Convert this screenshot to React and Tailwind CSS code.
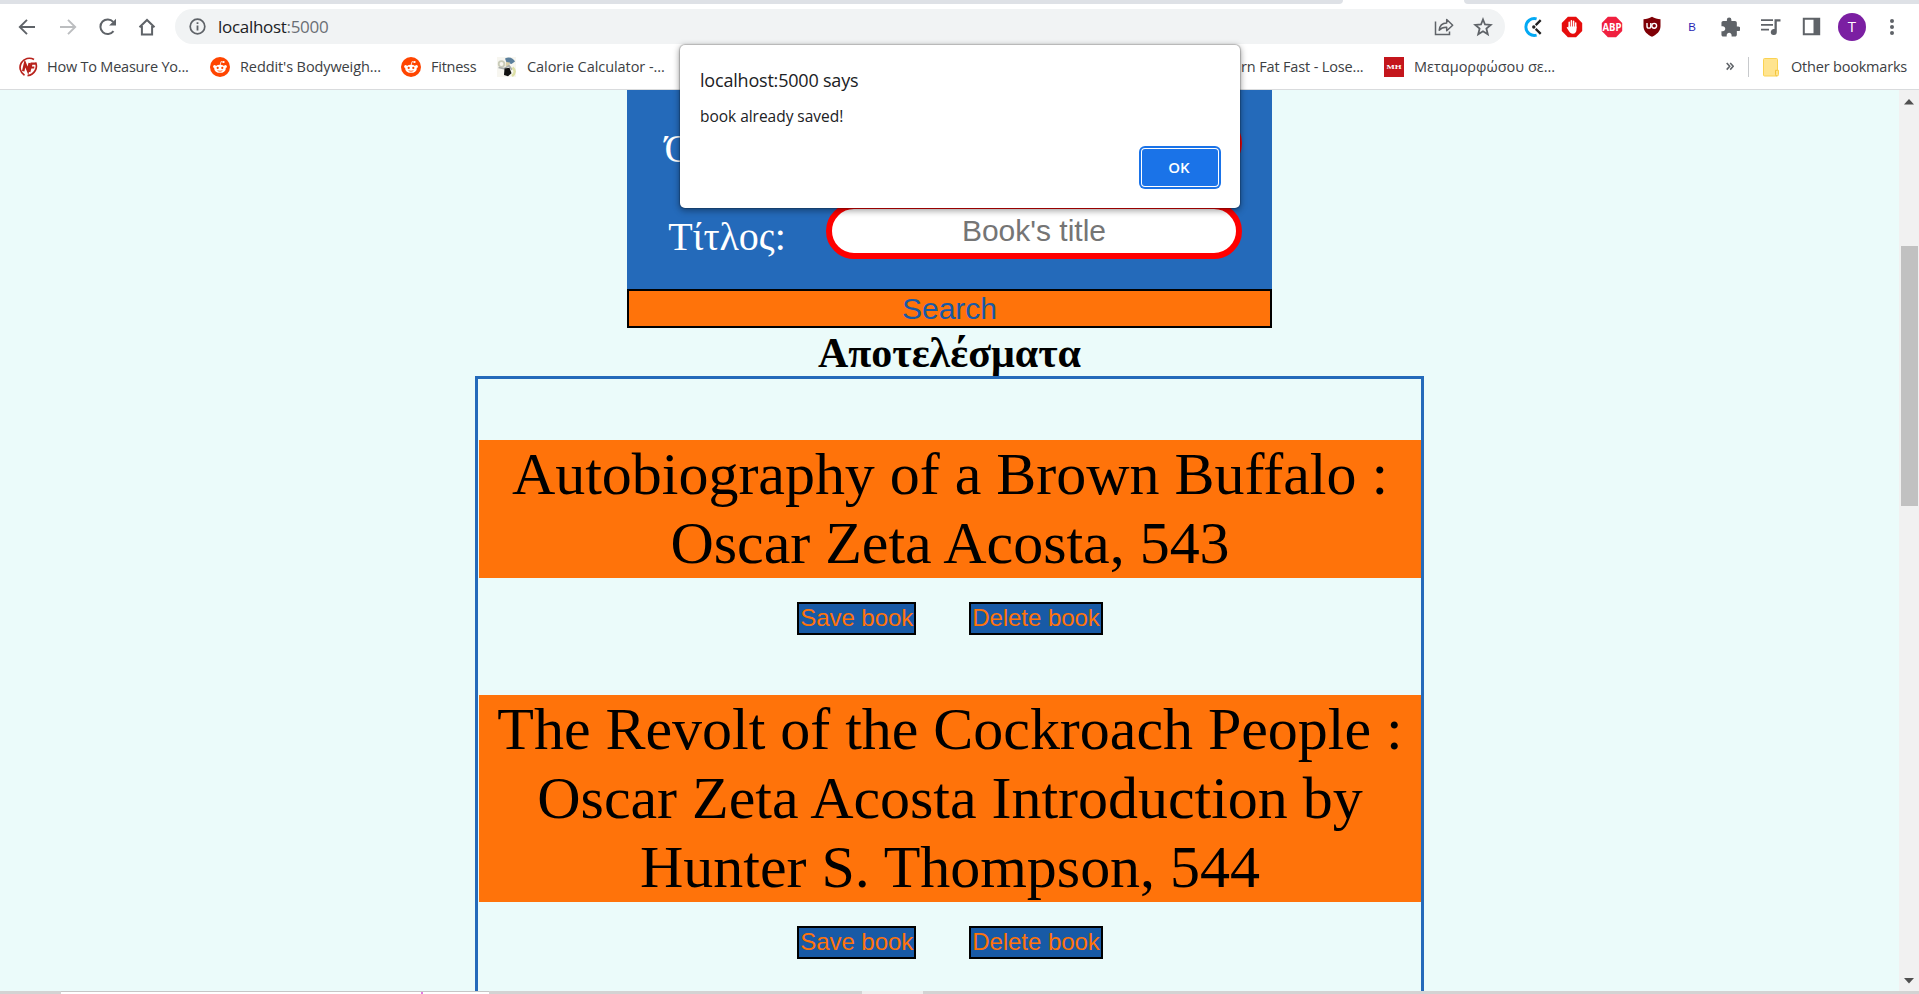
import React from "react";

const ui = "font-['Open_Sans',sans-serif]";

function RedditIcon() {
  return (
    <svg width="20" height="20" viewBox="0 0 20 20" className="shrink-0">
      <circle cx="10" cy="10" r="10" fill="#ff4500" />
      <path d="M10.200 8l.800-3.400 2.600.600" stroke="#fff" strokeWidth=".800" fill="none" />
      <circle cx="13.600" cy="5" r="1.100" fill="#fff" />
      <circle cx="4.600" cy="9.600" r="1.500" fill="#fff" />
      <circle cx="15.400" cy="9.600" r="1.500" fill="#fff" />
      <ellipse cx="10" cy="11.800" rx="5.800" ry="4" fill="#fff" />
      <circle cx="7.700" cy="10.900" r="1.100" fill="#ff4500" />
      <circle cx="12.300" cy="10.900" r="1.100" fill="#ff4500" />
      <path d="M7.600 13.400c1.300 1.100 3.500 1.100 4.800 0" stroke="#ff4500" strokeWidth=".800" fill="none" />
    </svg>
  );
}

function Toolbar() {
  return (
    <div className="flex h-[45px] w-full items-center pt-[8px]">
      <svg className="ml-[17px]" width="20" height="20" viewBox="0 0 20 20" fill="none" stroke="#5f6368" strokeWidth="1.900">
        <path d="M18 10H3.200M10 2.800L2.800 10l7.200 7.200" />
      </svg>
      <svg className="ml-[21px]" width="20" height="20" viewBox="0 0 20 20" fill="none" stroke="#bcbec0" strokeWidth="1.900">
        <path d="M2 10h14.800M10 2.800l7.200 7.200-7.200 7.200" />
      </svg>
      <svg className="ml-[20px]" width="20" height="20" viewBox="0 0 20 20">
        <path d="M15.500 14.200A7.300 7.300 0 1 1 15.200 4.900" fill="none" stroke="#5f6368" strokeWidth="2" />
        <path d="M18 1.700v6.900h-6.900z" fill="#5f6368" />
      </svg>
      <svg className="ml-[19px]" width="20" height="20" viewBox="0 0 20 20">
        <path d="M2.500 10.300L10 3l7.500 7.300M4.900 9v8.600h10.200V9" fill="none" stroke="#5f6368" strokeWidth="2" />
      </svg>
      <div className="ml-[18px] flex h-[35px] w-[1330px] items-center rounded-full bg-[#f1f3f4]">
        <svg className="ml-[14px]" width="17" height="17" viewBox="0 0 17 17">
          <circle cx="8.500" cy="8.500" r="7.300" fill="none" stroke="#5f6368" strokeWidth="1.700" />
          <path d="M8.500 7.400v5M8.500 4.200v1.900" stroke="#5f6368" strokeWidth="1.800" />
        </svg>
        <span className="ml-[12px] flex-1 text-[17px] leading-[24px] tracking-[-0.300px] text-[#202124]">
          localhost<span className="text-[#6b6f74]">:5000</span>
        </span>
        <svg width="20" height="20" viewBox="0 0 20 20" fill="none" stroke="#5f6368" strokeWidth="1.500">
          <path d="M1.500 4.500v13h14V14.500" />
          <path d="M5.200 13.200C5.600 9 8.200 6.300 12.700 6.100V2.500l6 5.700-6 5.600v-3.600c-3.300-.1-5.700.8-7.500 3z" strokeLinejoin="round" />
        </svg>
        <svg className="ml-[19px] mr-[12px]" width="20" height="20" viewBox="0 0 20 20" fill="none" stroke="#5f6368" strokeWidth="1.800">
          <path d="M10 2.500l2 5 5.700.4-4.300 3.700 1.400 5.700-4.800-3.100-4.800 3.100 1.400-5.700L2.300 7.900 8 7.500z" />
        </svg>
      </div>
      <svg className="ml-[17px]" width="22" height="22" viewBox="0 0 22 22">
        <path d="M14.600 2.800A8.500 8.500 0 1 0 14.600 19.200" fill="none" stroke="#03a9f4" strokeWidth="2.900" />
        <circle cx="11.800" cy="11" r="1.700" fill="#222" />
        <path d="M13.700 9.100l5-5M13.700 12.900l5 5" stroke="#222" strokeWidth="2.300" />
      </svg>
      <svg className="ml-[17px]" width="22" height="22" viewBox="0 0 22 22">
        <path d="M6.900.800h8.200L21.200 6.900v8.200L15.100 21.200H6.900L.800 15.100V6.900z" fill="#e60d0d" />
        <path d="M8.200 11.500V6.300M10.400 11V4.800M12.600 11V5.300M14.700 12V7" stroke="#fff" strokeWidth="1.500" strokeLinecap="round" />
        <path d="M7.400 10.500h8.100v3.200c0 2.200-1.300 4-3.600 4-2 0-2.900-.9-3.900-2.500L5.600 11.600c.6-1.100 1.500-.7 2 .2z" fill="#fff" />
      </svg>
      <svg className="ml-[18px]" width="22" height="22" viewBox="0 0 22 22">
        <path d="M6.900.800h8.200L21.200 6.900v8.200L15.100 21.200H6.900L.800 15.100V6.900z" fill="#f0203f" />
        <text x="11" y="14.600" textAnchor="middle" fontSize="10" fontWeight="700" fontFamily="Open Sans" textLength="19" lengthAdjust="spacingAndGlyphs" fill="#fff">ABP</text>
      </svg>
      <svg className="ml-[18px]" width="22" height="22" viewBox="0 0 22 22">
        <path d="M11 .800c2.600 1.600 5.500 2.400 8.500 2.400v7c0 5.200-4 8.300-8.500 10.600C6.500 18.500 2.500 15.400 2.500 10.200v-7c3 0 5.900-.8 8.500-2.400z" fill="#7f0006" />
        <path d="M6 7v3.200a1.900 1.900 0 0 0 3.800 0V7" fill="none" stroke="#fff" strokeWidth="1.400" />
        <circle cx="13.200" cy="9.800" r="2.400" fill="none" stroke="#fff" strokeWidth="1.400" />
      </svg>
      <span className="ml-[18px] w-[22px] text-center font-['Liberation_Sans'] text-[11.500px] leading-[22px] text-[#2a1fb5]">B</span>
      <svg className="ml-[18px]" width="19" height="20" viewBox="1.500 1 21 21" fill="#5f6368">
        <path d="M20.500 11H19V7c0-1.100-.9-2-2-2h-4V3.500a2.500 2.500 0 0 0-5 0V5H4c-1.100 0-1.990.9-1.990 2v3.800H3.500c1.490 0 2.700 1.210 2.700 2.700s-1.210 2.700-2.700 2.700H2V20c0 1.100.9 2 2 2h3.800v-1.500c0-1.490 1.210-2.700 2.700-2.700 1.490 0 2.700 1.210 2.700 2.700V22H17c1.100 0 2-.9 2-2v-4h1.500a2.500 2.500 0 0 0 0-5z" />
      </svg>
      <svg className="ml-[21px]" width="20" height="20" viewBox="0 0 20 20" fill="#5f6368">
        <path d="M0 2.300h12v1.800H0zM0 7h12v1.800H0zM0 11.700h8v1.800H0zM13.500 2.300h6v2.300h-3.700v10.400a3 3 0 1 1-2.300-2.900z" />
      </svg>
      <svg className="ml-[21px]" width="19" height="19" viewBox="0 0 19 19">
        <path d="M1.800 1.800h15.400v15.400H1.800z" fill="none" stroke="#5f6368" strokeWidth="2" />
        <path d="M11.500 1.800h6v15.400h-6z" fill="#5f6368" />
      </svg>
      <span className="ml-[17px] flex h-7 w-7 items-center justify-center rounded-full bg-[#7b1fa2] text-[15px] text-white">T</span>
      <svg className="ml-[23px]" width="6" height="18" viewBox="0 0 6 18" fill="#5f6368">
        <circle cx="3" cy="3" r="2" /><circle cx="3" cy="9" r="2" /><circle cx="3" cy="15" r="2" />
      </svg>
    </div>
  );
}

function Bookmarks() {
  return (
    <div className="flex h-[44px] items-center whitespace-nowrap text-[14.500px] leading-[20px] text-[#3c4043]">
      <svg className="ml-[18px] shrink-0" width="20" height="20" viewBox="0 0 20 20" fill="none" stroke="#b8221c">
        <path d="M16 2.600A9 9 0 1 0 6.500 18.300" strokeWidth="1.700" />
        <path d="M17.500 5.500c2.500 5-.5 12-8 13.200" strokeWidth="1.700" />
        <path d="M5.200 14.200L7 6.300l3 7.400 1.700-7.600" strokeWidth="2.500" />
        <path d="M11.300 15L13.500 6.700h4.200M12.600 10.500h3.700" strokeWidth="2.200" />
      </svg>
      <span className="ml-[9px] w-[143px] tracking-[-0.220px]">How To Measure Yo...</span>
      <div className="ml-[20px]"><RedditIcon /></div>
      <span className="ml-[10px] w-[143px] tracking-[-0.100px]">Reddit's Bodyweigh...</span>
      <div className="ml-[18px]"><RedditIcon /></div>
      <span className="ml-[10px] w-[46px] tracking-[-0.250px]">Fitness</span>
      <svg className="ml-[20px] shrink-0" width="19" height="20" viewBox="0 0 19 20">
        <path d="M0 0h19v20H0z" fill="#f7f6f0" />
        <circle cx="4.500" cy="7" r="2.800" fill="none" stroke="#c9cbb8" strokeWidth="1.800" />
        <path d="M8 1.500c4-2.400 8.500-.5 10 3l-3.500 2.500-5-1.500z" fill="#5b7f9c" />
        <path d="M9 5l4 .5-1 4-3.500-.5z" fill="#d9cfa8" />
        <path d="M1.500 10.500l5.500 1.200 5-3 3 4" fill="none" stroke="#a9adab" strokeWidth="1.700" />
        <path d="M7.500 11.500l5-.8 2 5.500-3.500 3-4-1.200z" fill="#111" />
        <path d="M15.500 10.500c3 2.500 3 6-.5 8.500" fill="none" stroke="#dde0a6" strokeWidth="2.500" />
      </svg>
      <span className="ml-[11px] w-[700px] tracking-[-0.060px]">Calorie Calculator -...</span>
      <span className="ml-[14px] w-[124px] tracking-[-0.150px]">rn Fat Fast - Lose...</span>
      <svg className="ml-[19px] shrink-0" width="20" height="20" viewBox="0 0 20 20">
        <path d="M0 0h20v20H0z" fill="#c4161c" />
        <text x="10" y="12" textAnchor="middle" fontSize="5.500" fontWeight="700" fontFamily="Liberation Serif" textLength="15" lengthAdjust="spacingAndGlyphs" fill="#fff">MH</text>
      </svg>
      <span className="ml-[10px] flex-1">Μεταμορφώσου σε...</span>
      <svg width="8" height="9" viewBox="0 0 8 9" fill="none" stroke="#5f6368" strokeWidth="1.600" className="mt-[-2px]">
        <path d="M.700 1l3 3.300-3 3.300M4.200 1l3 3.300-3 3.300" />
      </svg>
      <span className="ml-[14px] h-5 w-px bg-[#c8cacd]" />
      <svg className="ml-[14px]" width="16" height="19" viewBox="0 0 16 19">
        <path d="M1.500.500h12q1 0 1 1v10.800h1v4.200q0 1.500-1.500 1.500H1.500q-1 0-1-1v-15.500q0-1 1-1z" fill="#ffe48f" stroke="#fad252" />
        <path d="M14.500 12.300h-2v4.200q0 1.400 1.400 1.400" fill="none" stroke="#f3c43c" />
      </svg>
      <span className="ml-[12px] w-[128px] tracking-[-0.200px]">Other bookmarks</span>
    </div>
  );
}

function Field({ label, placeholder, nudge }) {
  return (
    <div className="flex h-[56px]">
      <div className={`w-[199px] pt-[11px] text-center font-['Liberation_Serif',serif] text-[40px] leading-[46px] text-white ${nudge}`}>{label}</div>
      <input
        placeholder={placeholder}
        className="h-[56px] w-[416px] rounded-full border-6 border-[#ff0000] bg-white text-center font-['Liberation_Sans',sans-serif] text-[30px] placeholder:text-[#757575]"
      />
    </div>
  );
}

function BookButton({ children }) {
  return (
    <button className="flex h-[33px] items-center justify-center border-2 border-black bg-[#185aa6] px-px pb-[2px] font-['Liberation_Sans',sans-serif] text-[24px] leading-[27px] tracking-[-0.050px] text-[#ff730a]">
      {children}
    </button>
  );
}

function Book({ title }) {
  return (
    <div className="mt-[60px]">
      <div className="bg-[#ff730a] text-center text-[60px] leading-[69px] tracking-[-0.030px] text-black">{title}</div>
      <div className="mt-[24px] flex justify-center gap-[53px]">
        <BookButton>Save book</BookButton>
        <BookButton>Delete book</BookButton>
      </div>
    </div>
  );
}

export default function App() {
  return (
    <div className={`relative flex h-[994px] w-[1919px] flex-col overflow-hidden bg-white ${ui}`}>
      <div className="flex h-[4px] shrink-0 justify-between">
        <div className="w-[1343px] rounded-br-[8px] bg-[#dee1e6]" />
        <div className="w-[455px] rounded-bl-[8px] bg-[#dee1e6]" />
      </div>
      <div className="mt-[-4px] h-[90px] shrink-0 border-b border-[#d9dbdd]">
        <Toolbar />
        <Bookmarks />
      </div>

      <div className="flex h-[901px] shrink-0">
        <div className="flex h-full flex-1 flex-col items-center overflow-hidden bg-[#ebfbfa] font-['Liberation_Serif',serif]">
          <div className="flex h-[199px] w-[645px] shrink-0 flex-col gap-[32px] bg-[#246aba] pt-[25px]">
            <Field label="Όνομα:" placeholder="" nudge="tracking-[0.600px]" />
            <Field label="Τίτλος:" placeholder="Book's title" nudge="pl-px" />
          </div>
          <button className="h-[39px] w-[645px] shrink-0 border-2 border-black bg-[#ff730a] text-center font-['Liberation_Sans',sans-serif] text-[30px] leading-[35px] text-[#185aa6]">
            Search
          </button>
          <h2 className="h-[48px] shrink-0 pt-px text-[42px] leading-[48px] font-bold text-black">Αποτελέσματα</h2>
          <div className="h-[700px] w-[949px] shrink-0 border-3 border-[#246aba] pt-px pl-px">
            <Book title="Autobiography of a Brown Buffalo : Oscar Zeta Acosta, 543" />
            <Book title="The Revolt of the Cockroach People : Oscar Zeta Acosta Introduction by Hunter S. Thompson, 544" />
          </div>
        </div>
        <div className="flex h-full w-[20px] flex-col items-center bg-[#f1f1f1]">
          <svg width="10" height="6" viewBox="0 0 10 6" className="mt-[9px]"><path d="M5 0l5 5.500H0z" fill="#505050" /></svg>
          <div className="mt-[141px] h-[260px] w-[17px] bg-[#c1c1c1]" />
          <svg width="10" height="6" viewBox="0 0 10 6" className="mt-auto mb-[7px]"><path d="M5 5.500L10 0H0z" fill="#505050" /></svg>
        </div>
      </div>

      <div className="flex h-[3px] shrink-0 bg-[#d3d3d3]">
        <div className="ml-[61px] flex w-[428px] border-t border-[#c6c6c6] bg-white">
          <div className="ml-[360px] h-[2px] w-[2px] bg-[#e07be0]" />
        </div>
        <div className="ml-[373px] w-[61px] bg-[#efefef]" />
      </div>

      <div className="absolute top-[45px] left-[680px] flex h-[163px] w-[560px] flex-col rounded-[5px] bg-white px-[20px] shadow-[0_0_1px_1px_rgba(0,0,0,0.2),0_2px_6px_1px_rgba(0,0,0,0.35)]">
        <div className="mt-[23px] text-[18px] leading-[24px] tracking-[-0.200px] text-[#202124]">localhost:5000 says</div>
        <div className="mt-[13px] text-[15.500px] leading-[22px] tracking-[-0.030px] text-[#202124]">book already saved!</div>
        <div className="mt-[22px] mr-[2px] flex h-[37px] w-[76px] items-center justify-center self-end rounded-[3px] bg-[#1a73e8] pr-[2px] text-[15px] font-semibold text-white shadow-[0_0_0_1px_#fff,0_0_0_3px_#1a73e8]">
          OK
        </div>
      </div>
    </div>
  );
}
